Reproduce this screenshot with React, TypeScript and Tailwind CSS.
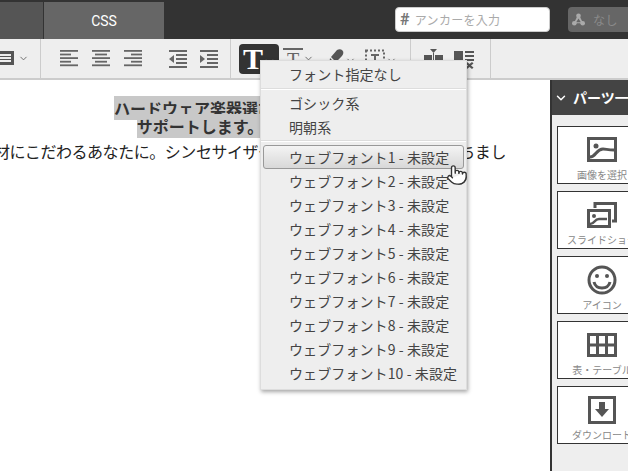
import { ChevronDown, Pointer } from "lucide-react";

const jp = "font-['Noto_Sans_CJK_JP','Noto_Sans',sans-serif]";

const fonts = [1, 2, 3, 4, 5, 6, 7, 8, 9, 10];

function Lines({ rows }: { rows: number[][] }) {
  // each row: x, width
  return (
    <svg width="20" height="20" viewBox="0 0 20 20" className="fill-[#666]">
      {rows.map(([x, w], i) => (
        <rect key={i} x={x} y={1 + i * 3.6} width={w} height="1.8" />
      ))}
    </svg>
  );
}

function Indent({ flip }: { flip?: boolean }) {
  return (
    <svg width="20" height="20" viewBox="0 0 20 20" className="fill-[#666]">
      <rect x="1" y="1" width="18" height="2" />
      <rect x="8" y="5" width="11" height="2" />
      <rect x="8" y="9" width="11" height="2" />
      <rect x="8" y="13" width="11" height="2" />
      <rect x="1" y="17" width="18" height="2" />
      {flip ? <path d="M1 6l5 4-5 4z" /> : <path d="M6 6l-5 4 5 4z" />}
    </svg>
  );
}

function Chevron() {
  return <ChevronDown size={11} strokeWidth={2} className="text-[#666] shrink-0" />;
}

function Card({ label, children }: { label: string; children: React.ReactNode }) {
  return (
    <div className="h-[58px] w-[90px] shrink-0 bg-white border border-[#333] flex flex-col items-center pt-2 overflow-hidden">
      <div className="h-[30px] flex items-center">{children}</div>
      <span className="mt-[3px] text-[10px] leading-[14px] text-[#888] whitespace-nowrap">{label}</span>
    </div>
  );
}

export default function App() {
  return (
    <div className={`relative w-[628px] h-[471px] overflow-hidden bg-white flex flex-col ${jp}`}>
      {/* top bar */}
      <div className="h-[39px] shrink-0 bg-[#333] flex pt-[2px]">
        <div className="w-[43px] shrink-0 bg-[#555]" />
        <div className="w-[120px] shrink-0 ml-px bg-[#666] text-white text-sm flex items-center justify-center font-['Roboto',sans-serif]">
          CSS
        </div>
        <div className="ml-[231px] mt-[5px] w-[155px] h-[25px] shrink-0 bg-white rounded-sm border border-[#ccc] flex items-center pl-1 text-[12px] tracking-[0.3px] text-[#aaa]">
          <span className="font-bold text-[#777] text-[16px] leading-none mr-[5px] font-['Roboto',sans-serif]">#</span>
          アンカーを入力
        </div>
        <div className="ml-[18px] mt-[5px] w-[70px] h-[25px] bg-[#666] rounded-sm flex items-center pl-[4px] text-xs tracking-[0.5px] text-[#8a8a8a] gap-2 shrink-0">
          <svg width="13" height="13" viewBox="0 0 14 14" className="fill-[#aaa]">
            <circle cx="7" cy="3" r="2.5" />
            <circle cx="2.5" cy="11" r="2.5" />
            <circle cx="11.5" cy="11" r="2.5" />
            <path d="M6 3L2 11h10L8 3zM7 6l2.500 4h-5z" fillRule="evenodd" />
          </svg>
          なし
        </div>
      </div>

      {/* toolbar */}
      <div className="h-[41px] shrink-0 bg-[#eee] border-b-2 border-[#ccc] flex">
        <div className="w-[41px] shrink-0 border-r border-[#ccc] flex items-center pb-[1px]">
          <svg width="15" height="16" viewBox="0 0 15 16" className="fill-[#555]">
            <path d="M0 1h14v14H0zM0 4v2h11V4zM0 7v2h11V7zM0 10v2h11v-2z" fillRule="evenodd" />
          </svg>
          <span className="ml-[3px]"><Chevron /></span>
        </div>
        <div className="w-[190px] shrink-0 border-r border-[#ccc] flex items-center pl-[19px]">
          <Lines rows={[[0, 18], [0, 11], [0, 18], [0, 11], [0, 18]]} />
          <span className="w-3" />
          <Lines rows={[[0, 18], [3, 12], [0, 18], [3, 12], [0, 18]]} />
          <span className="w-3" />
          <Lines rows={[[0, 18], [7, 11], [0, 18], [7, 11], [0, 18]]} />
          <span className="w-[24px]" />
          <Indent />
          <span className="w-[11px]" />
          <Indent flip />
        </div>
        <div className="w-[180px] shrink-0 border-r border-[#ccc] flex items-center pl-2">
          <div className="w-[40px] h-[30px] bg-[#333] rounded flex items-center pl-[4px]">
            <span className="text-white font-bold text-[30px] leading-none font-['Liberation_Serif',serif]">T</span>
            <ChevronDown size={11} strokeWidth={2} className="ml-[1px] mt-[6px] text-[#ddd] shrink-0" />
          </div>
          <div className="ml-[4px] flex items-center">
            <span className="text-[#666] text-[20px] leading-none font-['Liberation_Serif',serif] border-t-2 border-[#666] w-5 text-center">T</span>
            <Chevron />
          </div>
        </div>
        <div className="w-[80px] shrink-0 border-r border-[#ccc]" />
        <div className="flex-1" />
      </div>

      {/* body */}
      <div className="flex-1 min-h-0 flex">
        <div className="w-[550px] shrink-0 overflow-visible">
          <div className="w-[500px] flex flex-col items-center pt-[19px] text-[16px] leading-[18px] text-[#222]">
            <div className="whitespace-nowrap font-bold text-[#333]">
              <span className="bg-[#c8c8c8]">ハードウェア楽器選びから音作りまで</span>
            </div>
            <div className="whitespace-nowrap font-bold text-[#333] pr-[4px]">
              <span className="bg-[#c8c8c8]">サポートします。ご相談下さい</span>
            </div>
            <div className="whitespace-nowrap mt-[4px] leading-[24px] tracking-[-0.45px]">
              材にこだわるあなたに。シンセサイザーの音作りを始めよう。お待ちまし
            </div>
          </div>
        </div>
        <div className="flex-1 border-l-2 border-[#333] bg-[#eee] flex flex-col overflow-hidden">
          <div className="h-[35px] shrink-0 bg-[#444] flex items-center pl-[2px] gap-[5px] text-white text-[14px] font-bold whitespace-nowrap">
            <ChevronDown size={14} strokeWidth={2.5} className="text-white shrink-0" />
            パーツ一覧
          </div>
          <div className="pl-[5px] pt-[11px] flex flex-col gap-[7px]">
            <Card label="画像を選択">
              <svg width="30" height="26" viewBox="0 0 30 26" fill="none" stroke="#555" strokeWidth="3">
                <rect x="1.5" y="1.500" width="27" height="22" />
                <circle cx="9" cy="9" r="2.5" fill="#555" stroke="none" />
                <path d="M3 20c6 0 6-8 13-8 3 0 5 1 11 1" />
              </svg>
            </Card>
            <Card label="スライドショー">
              <svg width="30" height="26" viewBox="0 0 30 26" fill="none" stroke="#555" strokeWidth="3">
                <rect x="1.5" y="8.5" width="21" height="16" />
                <path d="M8 6V1.5h20.5V19H25" />
                <circle cx="7" cy="14" r="2" fill="#555" stroke="none" />
                <path d="M3 22c5 0 4-5 9-5h8" strokeWidth="2.5" />
              </svg>
            </Card>
            <Card label="アイコン">
              <svg width="30" height="30" viewBox="0 0 30 30" fill="none" stroke="#555" strokeWidth="3">
                <circle cx="15" cy="15" r="13" />
                <circle cx="10" cy="11" r="2" fill="#555" stroke="none" />
                <circle cx="20" cy="11" r="2" fill="#555" stroke="none" />
                <path d="M7 17c2 8 14 8 16 0" />
              </svg>
            </Card>
            <Card label="表・テーブル">
              <svg width="30" height="24" viewBox="0 0 30 24" fill="none" stroke="#555" strokeWidth="3">
                <rect x="1.5" y="1.5" width="27" height="21" />
                <path d="M10.5 1v22M19.5 1v22M1 12h28" />
              </svg>
            </Card>
            <Card label="ダウンロード">
              <svg width="28" height="28" viewBox="0 0 28 28">
                <rect x="1.5" y="1.5" width="25" height="25" fill="none" stroke="#555" strokeWidth="3" />
                <path d="M11 6h6v7h4l-7 8-7-8h4z" fill="#555" />
              </svg>
            </Card>
          </div>
        </div>
      </div>

      {/* toolbar icons that the menu partly covers */}
      <div className="absolute left-[328px] top-[49px] flex items-center text-[#666]">
        <svg width="16" height="20" viewBox="0 0 16 20" className="fill-[#555]">
          <path d="M9 1c2-1 4-1 5.500.5s1 4-1 6L8 13 3 8zM2 9l5 5-6 3z" />
        </svg>
        <span className="ml-[1px] mt-[3px]"><Chevron /></span>
        <svg width="20" height="20" viewBox="0 0 20 20" fill="none" stroke="#666" className="ml-[9px]">
          <rect x="1" y="1.5" width="18" height="17" strokeWidth="2" strokeDasharray="2 2" />
          <path d="M6 6h8M10 6v9" strokeWidth="2" />
        </svg>
        <span className="ml-[1px] mt-[3px]"><Chevron /></span>
      </div>
      <div className="absolute left-[424px] top-[49px] flex gap-[11px]">
        <svg width="19" height="20" viewBox="0 0 19 20" className="fill-[#555]">
          <rect x="0" y="6" width="8" height="13" />
          <rect x="11" y="6" width="8" height="13" />
          <path d="M6 0h7l-3.500 4z" />
          <rect x="9" y="4" width="1" height="15" />
        </svg>
        <svg width="21" height="20" viewBox="0 0 21 20" className="fill-[#555]">
          <rect x="0" y="2" width="9" height="9" />
          <rect x="11" y="2" width="9" height="2" />
          <rect x="11" y="6" width="9" height="2" />
          <rect x="11" y="10" width="9" height="2" />
          <path d="M13 13l2.500 2 2.500-2 1.500 1.500-2.500 2 2.500 2-1.500 1.500-2.500-2-2.500 2-1.500-1.500 2.500-2-2.500-2z" />
        </svg>
      </div>

      {/* font dropdown */}
      <div className="absolute left-[260px] top-[60px] w-[207px] h-[330px] bg-[#eee] border border-[#ddd] shadow-[1px_2px_4px_rgba(0,0,0,0.35)] text-[14px] leading-[24px] text-[#444] tracking-[0.1px] flex flex-col pt-[1px]">
        <div className="h-[24px] pl-[28px]">フォント指定なし</div>
        <div className="h-[2px] mt-[2px] bg-[#ddd] border-b border-white" />
        <div className="h-[24px] pl-[28px] mt-[1px]">ゴシック系</div>
        <div className="h-[24px] pl-[28px]">明朝系</div>
        <div className="h-[2px] mt-[1px] bg-[#ddd] border-b border-white" />
        <div className="mt-[3px] flex flex-col">
          {fonts.map((n) => (
            <div
              key={n}
              className={
                n === 1
                  ? "h-[24px] mx-[2px] pl-[25px] rounded-[3px] border border-[#999] bg-gradient-to-b from-[#f4f4f4] to-[#d8d8d8] leading-[22px]"
                  : "h-[24px] pl-[28px] whitespace-nowrap"
              }
            >
              {`ウェブフォント${n} - 未設定`}
            </div>
          ))}
        </div>
      </div>

      {/* mouse cursor */}
      <Pointer size={22} strokeWidth={1.5} fill="#fff" className="absolute left-[446px] top-[164px] text-[#333]" />
    </div>
  );
}
